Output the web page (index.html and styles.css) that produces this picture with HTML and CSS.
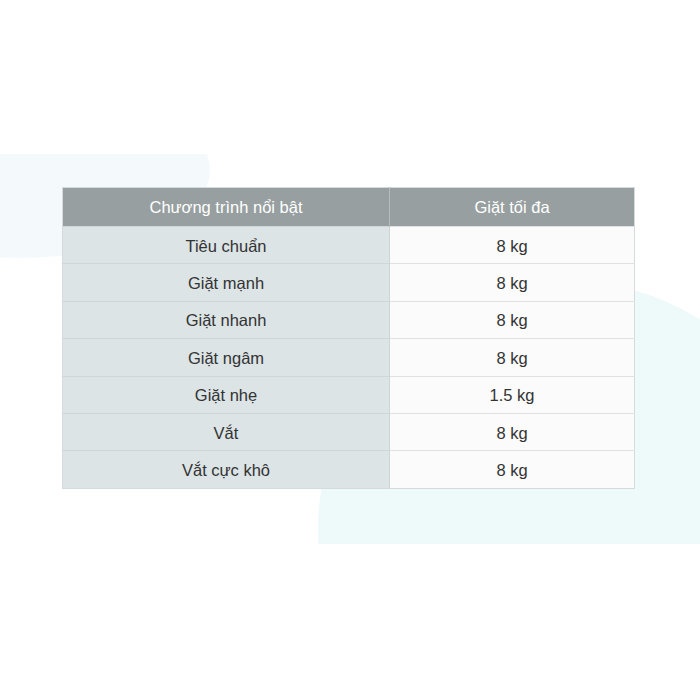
FILE: index.html
```html
<!DOCTYPE html>
<html lang="vi">
<head>
<meta charset="utf-8">
<link rel="stylesheet" href="styles.css">
</head>
<body>
<div class="page">
  <div class="deco deco-top"><div class="blob blob-top"></div></div>
  <div class="deco deco-right"><div class="blob blob-right"></div></div>
  <table class="spec">
    <thead>
      <tr><th class="c1">Chương trình nổi bật</th><th class="c2">Giặt tối đa</th></tr>
    </thead>
    <tbody>
      <tr><td class="c1">Tiêu chuẩn</td><td class="c2">8 kg</td></tr>
      <tr><td class="c1">Giặt mạnh</td><td class="c2">8 kg</td></tr>
      <tr><td class="c1">Giặt nhanh</td><td class="c2">8 kg</td></tr>
      <tr><td class="c1">Giặt ngâm</td><td class="c2">8 kg</td></tr>
      <tr><td class="c1">Giặt nhẹ</td><td class="c2">1.5 kg</td></tr>
      <tr><td class="c1">Vắt</td><td class="c2">8 kg</td></tr>
      <tr><td class="c1">Vắt cực khô</td><td class="c2">8 kg</td></tr>
    </tbody>
  </table>
</div>
</body>
</html>
```
FILE: styles.css
```css
html, body {
  margin: 0;
  padding: 0;
  background: #ffffff;
}
.page {
  position: relative;
  width: 700px;
  height: 700px;
  overflow: hidden;
  padding-top: 187px;
  padding-left: 62px;
  box-sizing: border-box;
  font-family: "Liberation Sans", Arial, sans-serif;
}
.deco {
  position: absolute;
  overflow: hidden;
}
.deco-top {
  left: 0;
  top: 154px;
  width: 260px;
  height: 120px;
}
.blob-top {
  position: absolute;
  left: -170px;
  top: -72px;
  width: 380px;
  height: 176px;
  border-radius: 50%;
  background: #f4fafc;
}
.deco-right {
  left: 300px;
  top: 270px;
  width: 400px;
  height: 274px;
}
.blob-right {
  position: absolute;
  left: 18px;
  top: 11px;
  width: 498px;
  height: 498px;
  border-radius: 50%;
  background: #eef9fa;
}
.spec {
  position: relative;
  border-collapse: collapse;
  width: 573px;
  font-size: 16.5px;
  line-height: 19px;
  color: #333333;
  table-layout: fixed;
  border: 1px solid #d5dbdc;
}
.spec th {
  height: 38px;
  padding: 0;
  background: #979fa0;
  color: #ffffff;
  font-weight: normal;
  text-align: center;
}
.spec th.c1 {
  width: 326px;
  border-right: 1px solid #b5bcbd;
}
.spec td {
  height: 34.4px;
  padding: 2px 0 0;
  text-align: center;
  border-top: 1px solid #d0d7d8;
}
.spec td.c1 {
  background: #dce4e6;
  border-right: 1px solid #cdd5d7;
}
.spec td.c2 {
  background: #fbfbfb;
  border-top-color: #e0e2e2;
}
```
